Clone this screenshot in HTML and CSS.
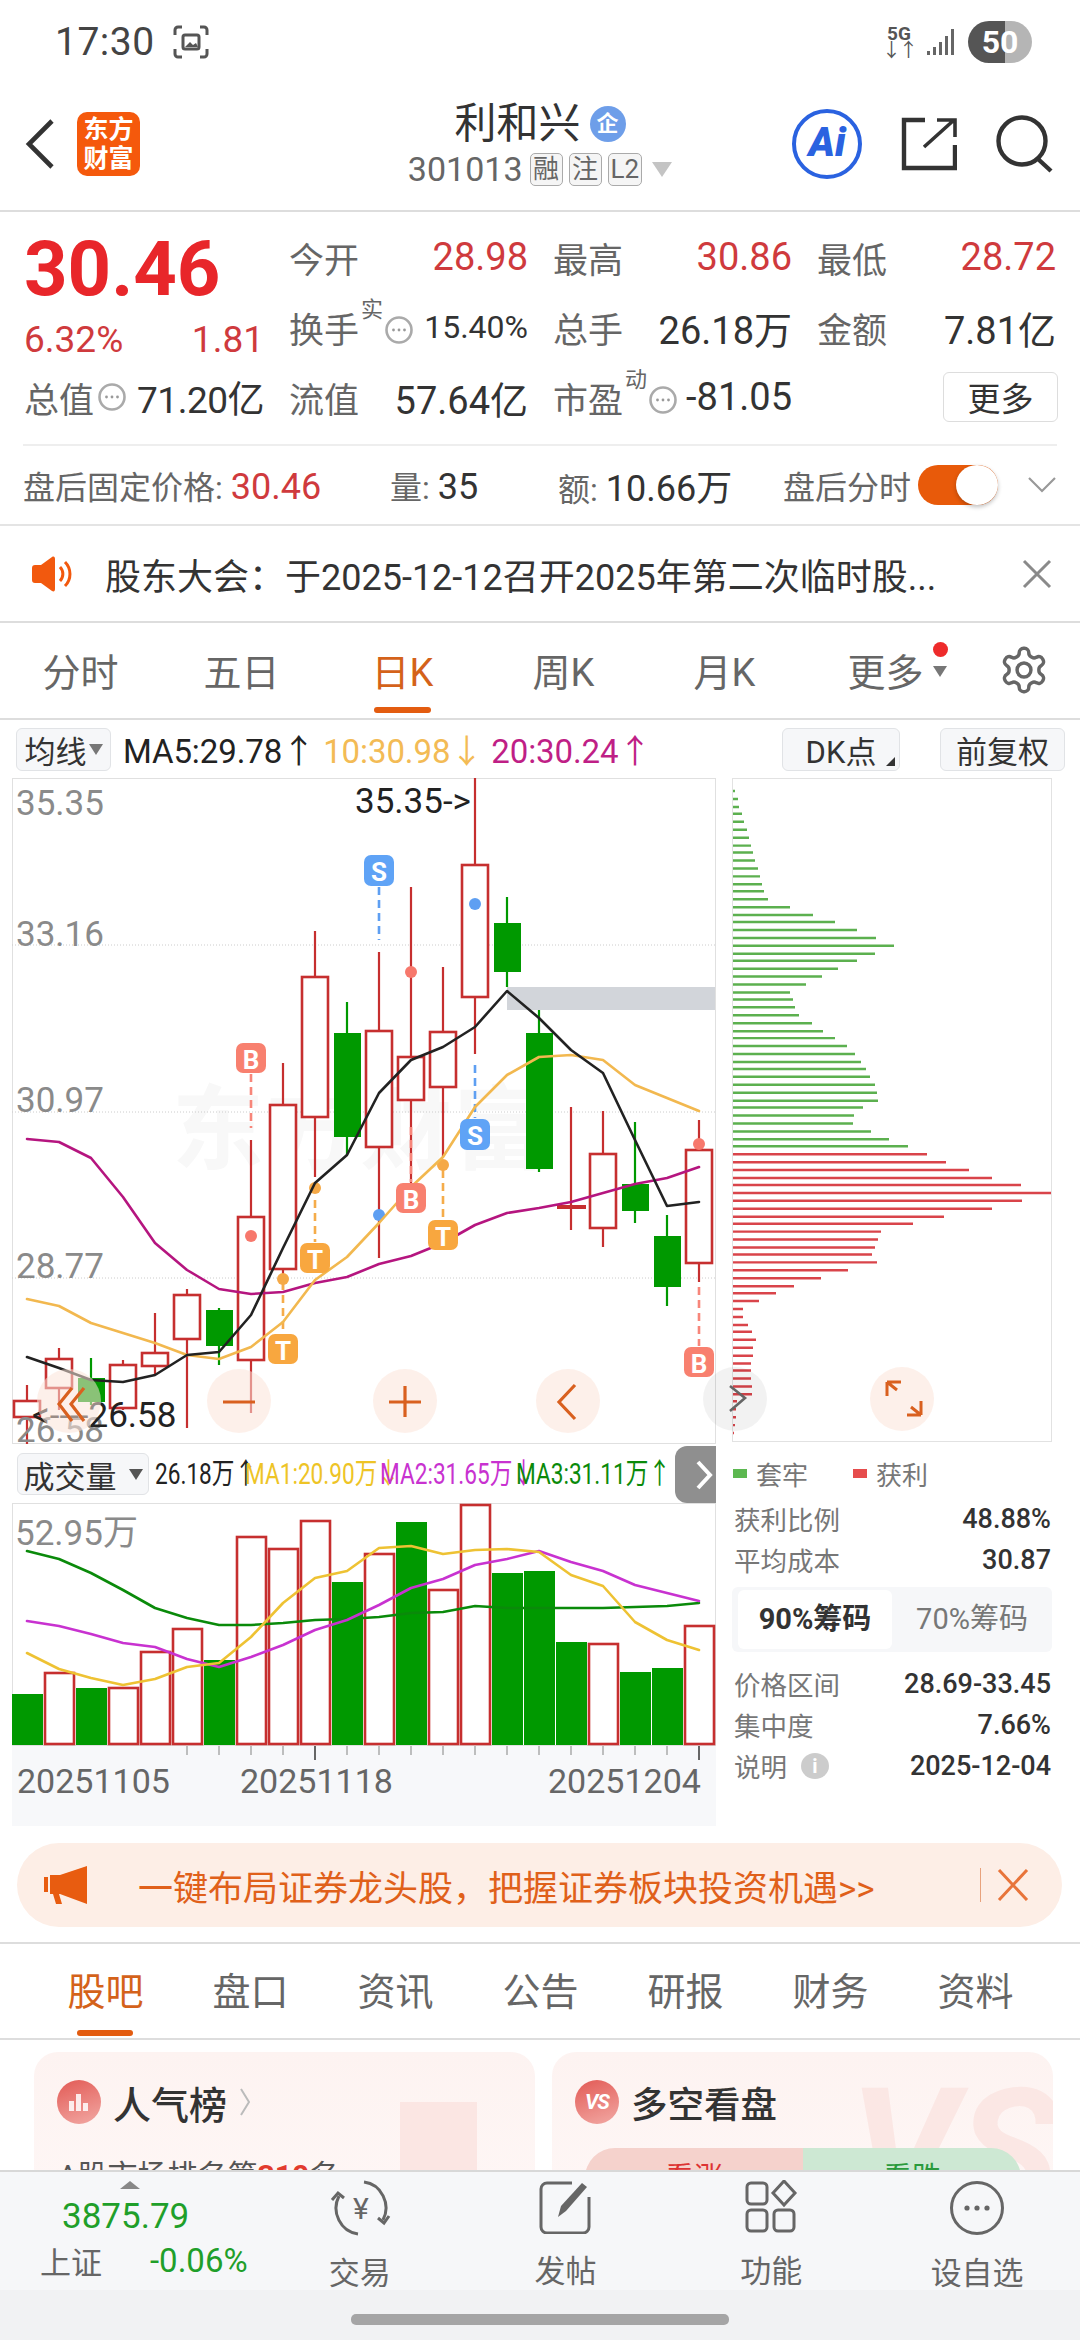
FILE: index.html
```html
<!DOCTYPE html>
<html lang="zh-CN">
<head>
<meta charset="utf-8">
<title>利和兴 301013</title>
<link rel="stylesheet" href="styles.css">
</head>
<body>
<svg class="defs" width="0" height="0" aria-hidden="true">
  <symbol id="more-dots" viewBox="0 0 28 28">
    <circle cx="14" cy="14" r="12.5" fill="none" stroke="#aaa" stroke-width="2.6"/>
    <circle cx="8.5" cy="14" r="1.4" fill="#999"/><circle cx="14" cy="14" r="1.4" fill="#999"/><circle cx="19.5" cy="14" r="1.4" fill="#999"/>
  </symbol>
</svg>
<div class="screen">

  <div class="status">
    <div class="status-left">
      <span class="clock">17:30</span>
      <svg class="shot" viewBox="0 0 36 34" width="36" height="34"><path d="M9 2H5a3 3 0 0 0-3 3v5M27 2h4a3 3 0 0 1 3 3v5M9 32H5a3 3 0 0 1-3-3v-5M27 32h4a3 3 0 0 0 3-3v-5" fill="none" stroke="#555" stroke-width="3"/><rect x="10" y="10" width="16" height="14" rx="2" fill="none" stroke="#555" stroke-width="3"/><path d="M12 22l5-5 3 3 3-2 2 4z" fill="#555"/></svg>
    </div>
    <div class="status-right">
      <div class="net"><span>5G</span><span class="net-arrows">↓↑</span></div>
      <svg class="signal" viewBox="0 0 30 28" width="30" height="28"><path d="M1 23h3v4H1zM7 19h3v8H7zM13 14h3v13h-3zM19 8h3v19h-3zM25 1h3v26h-3z" fill="#666"/></svg>
      <div class="battery">50</div>
    </div>
  </div>

  <header class="nav">
    <div class="nav-left">
      <svg class="back" viewBox="0 0 32 52" width="32" height="52"><path d="M28 3L5 26l23 23" fill="none" stroke="#333" stroke-width="4.6"/></svg>
      <div class="logo"><span>东方</span><span>财富</span></div>
    </div>
    <div class="nav-title">
      <div class="title-line"><span class="title">利和兴</span><span class="qi">企</span></div>
      <div class="code-line"><span class="code">301013</span><span class="tag">融</span><span class="tag">注</span><span class="tag">L2</span><span class="caret"></span></div>
    </div>
    <div class="nav-right">
      <div class="ai"><span>Ai</span></div>
      <svg viewBox="0 0 56 54" width="56" height="54"><path d="M24 3H3v48h51V28" fill="none" stroke="#333" stroke-width="4.4"/><path d="M23 30L53 3M36 3h18v17" fill="none" stroke="#333" stroke-width="3.6"/></svg>
      <svg viewBox="0 0 58 58" width="58" height="58"><circle cx="26" cy="26" r="23.5" fill="none" stroke="#333" stroke-width="4.4"/><path d="M42 44l13 12" fill="none" stroke="#333" stroke-width="4.4"/></svg>
    </div>
  </header>

  <section class="quote">
    <div class="price-block">
      <div class="price">30.46</div>
      <div class="change"><span>6.32%</span><span>1.81</span></div>
    </div>
    <div class="cell"><span class="lbl">今开</span><span class="val up">28.98</span></div>
    <div class="cell"><span class="lbl">最高</span><span class="val up">30.86</span></div>
    <div class="cell"><span class="lbl">最低</span><span class="val up">28.72</span></div>
    <div class="cell"><span class="lbl-group"><span class="lbl">换手</span><sup class="mark">实</sup><svg class="dots" width="28" height="28"><use href="#more-dots"/></svg></span><span class="val val-sm">15.40%</span></div>
    <div class="cell"><span class="lbl">总手</span><span class="val">26.18万</span></div>
    <div class="cell"><span class="lbl">金额</span><span class="val">7.81亿</span></div>
    <div class="cell"><span class="lbl-group"><span class="lbl">总值</span><svg class="dots" width="28" height="28"><use href="#more-dots"/></svg></span><span class="val val-tight">71.20亿</span></div>
    <div class="cell"><span class="lbl">流值</span><span class="val">57.64亿</span></div>
    <div class="cell"><span class="lbl-group"><span class="lbl">市盈</span><sup class="mark">动</sup><svg class="dots" width="28" height="28"><use href="#more-dots"/></svg></span><span class="val">-81.05</span></div>
    <div class="cell cell-end"><button class="more">更多</button></div>
  </section>

  <section class="after">
    <span class="after-a"><span class="muted">盘后固定价格:</span> <span class="up num">30.46</span></span>
    <span class="after-b"><span class="muted">量:</span> <span class="num">35</span></span>
    <span class="after-c"><span class="muted">额:</span> <span class="num">10.66万</span></span>
    <span class="after-d muted">盘后分时</span>
    <span class="toggle"></span>
    <svg class="after-arrow" viewBox="0 0 28 16" width="28" height="16"><path d="M1 1l13 13L27 1" fill="none" stroke="#999" stroke-width="2.2"/></svg>
  </section>

  <section class="notice">
    <svg viewBox="0 0 42 36" width="42" height="36"><path d="M1 12a3 3 0 0 1 3-3h6L21 1c2-1 3 0 3 2v30c0 2-1 3-3 2L10 27H4a3 3 0 0 1-3-3z" fill="#f2590e"/><path d="M29 11a10 10 0 0 1 0 14M34 6a17 17 0 0 1 0 24" fill="none" stroke="#f2590e" stroke-width="3"/></svg>
    <span class="notice-text">股东大会：于2025-12-12召开2025年第二次临时股...</span>
    <svg viewBox="0 0 30 30" width="30" height="30"><path d="M2 2l26 26M28 2L2 28" stroke="#8a8a8a" stroke-width="3"/></svg>
  </section>

  <nav class="periods">
    <span>分时</span><span>五日</span><span class="on">日K</span><span>周K</span><span>月K</span>
    <span class="period-more">更多<i class="red-dot"></i><i class="mini-caret"></i></span>
    <svg class="gear" viewBox="0 0 24 24" width="52" height="52"><path d="M12.22 2h-.44a2 2 0 0 0-2 2v.18a2 2 0 0 1-1 1.73l-.43.25a2 2 0 0 1-2 0l-.15-.08a2 2 0 0 0-2.73.73l-.22.38a2 2 0 0 0 .73 2.73l.15.1a2 2 0 0 1 1 1.72v.51a2 2 0 0 1-1 1.74l-.15.09a2 2 0 0 0-.73 2.73l.22.38a2 2 0 0 0 2.73.73l.15-.08a2 2 0 0 1 2 0l.43.25a2 2 0 0 1 1 1.73V20a2 2 0 0 0 2 2h.44a2 2 0 0 0 2-2v-.18a2 2 0 0 1 1-1.73l.43-.25a2 2 0 0 1 2 0l.15.08a2 2 0 0 0 2.73-.73l.22-.39a2 2 0 0 0-.73-2.73l-.15-.08a2 2 0 0 1-1-1.74v-.5a2 2 0 0 1 1-1.74l.15-.09a2 2 0 0 0 .73-2.73l-.22-.38a2 2 0 0 0-2.73-.73l-.15.08a2 2 0 0 1-2 0l-.43-.25a2 2 0 0 1-1-1.73V4a2 2 0 0 0-2-2z" fill="none" stroke="#666" stroke-width="1.6"/><circle cx="12" cy="12" r="3.2" fill="none" stroke="#666" stroke-width="1.6"/></svg>
  </nav>

  <div class="tools">
    <span class="chip chip-ma">均线<i class="mini-caret"></i></span>
    <span class="ma-line"><span class="c-black">MA5:29.78↑</span> <span class="c-orange">10:30.98↓</span> <span class="c-magenta">20:30.24↑</span></span>
    <span class="chip chip-dk">DK点<i class="corner"></i></span>
    <span class="chip chip-fq">前复权</span>
  </div>

  <div class="chart-row">
    <div class="chart-left">
      <svg class="kline" viewBox="12 778 704 667" width="704" height="667">
        <rect x="12.5" y="778.5" width="703" height="665" class="frame"/>
        <text x="172" y="1162" class="watermark">东方财富</text>
        <path d="M12 945H715M12 1112H715M12 1278H715" class="grid"/>
        <rect x="507" y="987" width="208" height="23" fill="#d2d5da"/>

        <!-- candles: wick first, then body -->
        <path class="wick-up" d="M27 1385V1444M59 1348V1410M123 1360V1410M155 1313V1375M187 1289V1428M251 1140V1413M283 1063V1290M315 931V1177M379 952V1258M411 887V1183M443 967V1157M475 778V1054M571 1107V1230M603 1111V1247M699 1120V1282"/>
        <path class="wick-dn" d="M91 1358V1405M219 1308V1365M347 1002V1155M507 897V987M539 1010V1172M635 1122V1223M667 1215V1306"/>
        <g class="body-up">
          <rect x="14" y="1401" width="26" height="16"/><rect x="46" y="1359" width="26" height="29"/><rect x="110" y="1365" width="26" height="43"/><rect x="142" y="1353" width="26" height="13"/><rect x="174" y="1295" width="26" height="44"/><rect x="238" y="1217" width="26" height="143"/><rect x="270" y="1105" width="26" height="164"/><rect x="302" y="977" width="26" height="140"/><rect x="366" y="1031" width="26" height="116"/><rect x="398" y="1057" width="26" height="43"/><rect x="430" y="1032" width="26" height="55"/><rect x="462" y="865" width="26" height="132"/><rect x="590" y="1154" width="26" height="74"/><rect x="686" y="1150" width="26" height="113"/>
        </g>
        <rect x="557" y="1205" width="29" height="4" fill="#c62f2f"/>
        <g class="body-dn">
          <rect x="78" y="1378" width="27" height="24"/><rect x="206" y="1310" width="27" height="36"/><rect x="334" y="1033" width="27" height="104"/><rect x="494" y="923" width="27" height="49"/><rect x="526" y="1033" width="27" height="136"/><rect x="622" y="1184" width="27" height="27"/><rect x="654" y="1236" width="27" height="51"/>
        </g>

        <!-- signal marks and their leaders -->
        <path class="lead lead-b" d="M251 1074V1128M411 1127V1182M699 1287V1346"/>
        <path class="lead lead-t" d="M283 1282V1333M315 1200V1242M443 1170V1219"/>
        <path class="lead lead-s" d="M379 887V940M475 1065V1118"/>
        <circle cx="251" cy="1236" r="6" class="dot-b"/><circle cx="411" cy="972" r="6" class="dot-b"/><circle cx="699" cy="1144" r="6" class="dot-b"/>
        <circle cx="283" cy="1279" r="6" class="dot-t"/><circle cx="315" cy="1188" r="6" class="dot-t"/><circle cx="443" cy="1165" r="6" class="dot-t"/>
        <circle cx="379" cy="1215" r="6" class="dot-s"/><circle cx="475" cy="904" r="6" class="dot-s"/>

        <!-- moving averages -->
        <polyline class="ma ma-20" points="27,1139 59,1142 91,1158 123,1197 155,1243 187,1270 219,1289 251,1294 283,1292 315,1283 347,1277 379,1264 411,1256 443,1243 475,1225 507,1213 539,1208 571,1202 603,1193 635,1184 667,1178 699,1167"/>
        <polyline class="ma ma-10" points="27,1299 59,1306 91,1323 123,1333 155,1343 187,1355 219,1359 251,1347 283,1322 315,1280 347,1257 379,1223 411,1187 443,1157 475,1107 507,1075 539,1057 571,1055 603,1060 635,1085 667,1098 699,1111"/>
        <polyline class="ma ma-5" points="27,1357 59,1368 91,1380 123,1382 155,1375 187,1355 219,1352 251,1315 283,1248 315,1183 347,1155 379,1093 411,1060 443,1047 475,1027 507,991 539,1018 571,1050 603,1073 635,1140 667,1206 699,1202"/>

        <g class="mark-b"><rect x="236" y="1043" width="30" height="30" rx="7"/><text x="251" y="1069">B</text><rect x="396" y="1183" width="30" height="30" rx="7"/><text x="411" y="1209">B</text><rect x="684" y="1347" width="30" height="30" rx="7"/><text x="699" y="1373">B</text></g>
        <g class="mark-t"><rect x="268" y="1334" width="30" height="30" rx="7"/><text x="283" y="1360">T</text><rect x="300" y="1243" width="30" height="30" rx="7"/><text x="315" y="1269">T</text><rect x="428" y="1220" width="30" height="30" rx="7"/><text x="443" y="1246">T</text></g>
        <g class="mark-s"><rect x="364" y="855" width="30" height="31" rx="7"/><text x="379" y="881">S</text><rect x="460" y="1119" width="30" height="31" rx="7"/><text x="475" y="1145">S</text></g>

        <!-- axis labels -->
        <g class="axis"><text x="16" y="815">35.35</text><text x="16" y="946">33.16</text><text x="16" y="1112">30.97</text><text x="16" y="1278">28.77</text><text x="16" y="1442">26.58</text></g>
        <text x="355" y="813" class="extreme">35.35-&gt;</text>
        <text x="32" y="1427" class="extreme">&lt;----26.58</text>

        <!-- floating chart controls -->
        <circle cx="69" cy="1401" r="32" class="fab"/><circle cx="239" cy="1401" r="32" class="fab"/><circle cx="405" cy="1401" r="32" class="fab"/><circle cx="568" cy="1401" r="32" class="fab"/>
        <path class="fab-ico" d="M72 1388L59 1404l13 17M84 1388L71 1404l13 17M223 1402H255M389 1402H421M405 1386V1417M575 1385L559 1402l16 17"/>
      </svg>

      <div class="vol-tools">
        <span class="chip chip-vol">成交量<i class="mini-caret mini-dark"></i></span>
        <span class="vol-line"><span class="vv vv-0 c-black">26.18万↑</span><span class="vv vv-1 c-yellow">MA1:20.90万↓</span><span class="vv vv-2 c-violet">MA2:31.65万↓</span><span class="vv vv-3 c-green">MA3:31.11万↑</span></span>
        <span class="vol-next"><svg viewBox="0 0 18 30" width="18" height="30"><path d="M3 2l12 13L3 28" fill="none" stroke="#fff" stroke-width="4"/></svg></span>
      </div>

      <svg class="volume" viewBox="12 1503 704 323" width="704" height="323">
        <rect x="12" y="1745" width="704" height="81" fill="#f7f8fa"/>
        <rect x="12.5" y="1503.5" width="703" height="242" class="frame"/>
        <g class="vbar-dn">
          <rect x="12" y="1694" width="31" height="51"/><rect x="76" y="1688" width="31" height="57"/><rect x="204" y="1660" width="31" height="85"/><rect x="332" y="1582" width="31" height="163"/><rect x="396" y="1522" width="31" height="223"/><rect x="492" y="1573" width="31" height="172"/><rect x="524" y="1571" width="31" height="174"/><rect x="556" y="1642" width="31" height="103"/><rect x="620" y="1672" width="31" height="73"/><rect x="652" y="1668" width="31" height="77"/>
        </g>
        <g class="vbar-up">
          <rect x="45" y="1673" width="29" height="71"/><rect x="109" y="1688" width="29" height="56"/><rect x="141" y="1652" width="29" height="92"/><rect x="173" y="1629" width="29" height="115"/><rect x="237" y="1537" width="29" height="207"/><rect x="269" y="1549" width="29" height="195"/><rect x="301" y="1521" width="29" height="223"/><rect x="365" y="1554" width="29" height="190"/><rect x="429" y="1590" width="29" height="154"/><rect x="461" y="1505" width="29" height="239"/><rect x="589" y="1644" width="29" height="100"/><rect x="685" y="1626" width="29" height="118"/>
        </g>
        <polyline class="ma v3" points="27,1551 59,1559 91,1573 123,1590 155,1608 187,1618 219,1625 251,1625 283,1623 315,1620 347,1619 379,1617 411,1613 443,1612 475,1606 507,1608 539,1608 571,1608 603,1608 635,1607 667,1606 699,1603"/>
        <polyline class="ma v2" points="27,1621 59,1626 91,1634 123,1643 155,1647 187,1659 219,1667 251,1657 283,1645 315,1630 347,1620 379,1605 411,1588 443,1579 475,1565 507,1559 539,1551 571,1562 603,1571 635,1585 667,1593 699,1601"/>
        <polyline class="ma v1" points="27,1653 59,1669 91,1678 123,1685 155,1679 187,1667 219,1663 251,1637 283,1603 315,1578 347,1571 379,1548 411,1546 443,1554 475,1550 507,1549 539,1552 571,1575 603,1586 635,1622 667,1640 699,1650"/>
        <path class="ticks" d="M187 1746V1755M219 1746V1755M251 1746V1755M283 1746V1755M347 1746V1755M379 1746V1755M411 1746V1755M443 1746V1755M475 1746V1755M507 1746V1755M539 1746V1755M571 1746V1755M603 1746V1755M635 1746V1755M667 1746V1755"/>
        <path class="ticks ticks-major" d="M315 1746V1760M699 1746V1760"/>
        <text x="15" y="1545" class="axis-text">52.95万</text>
        <g class="dates"><text x="17" y="1793">20251105</text><text x="240" y="1793">20251118</text><text x="548" y="1793">20251204</text></g>
      </svg>
    </div>

    <div class="chart-right">
      <svg class="chips" viewBox="732 780 320 664" width="320" height="664">
        <rect x="732.5" y="780.5" width="319" height="663" class="chips-frame"/>
        <g transform="translate(0 -0.6) scale(1 0.9923) translate(0 6.8)">
        <path class="chip-green" d="M733 793H735M733 801H738M733 809H739M733 816H742M733 824H744M733 832H747M733 840H749M733 848H751M733 855H753M733 863H755M733 871H758M733 879H760M733 887H762M733 894H764M733 902H768M733 910H790M733 918H813M733 925H835M733 933H857M733 941H876M733 949H894M733 957H875M733 964H857M733 972H838M733 980H822M733 988H806M733 996H790M733 1003H793M733 1011H795M733 1019H799M733 1027H812M733 1035H823M733 1042H835M733 1050H847M733 1058H855M733 1066H861M733 1073H866M733 1081H870M733 1089H875M733 1097H877M733 1105H878M733 1112H863M733 1120H854M733 1128H853M733 1136H871M733 1144H889M733 1151H908"/>
        <path class="chip-red" d="M733 1159H927M733 1167H946M733 1175H969M733 1183H992M733 1190H1021M733 1198H1051M733 1206H1022M733 1214H992M733 1222H944M733 1229H913M733 1237H881M733 1245H878M733 1253H875M733 1260H872M733 1268H877M733 1276H848M733 1284H821M733 1292H794M733 1299H776M733 1307H759M733 1315H743M733 1323H743M733 1331H748M733 1338H752M733 1346H756M733 1354H753M733 1362H753M733 1370H751M733 1377H751M733 1385H751M733 1393H752M733 1401H752M733 1408H737M733 1416H736M733 1424H736M733 1432H735M733 1440H734"/>
        </g>
        <circle cx="735" cy="1401" r="32" class="fab-gray"/>
        <path d="M730 1388l15 12-15 13" fill="none" stroke="#666" stroke-width="2.6"/>
        <circle cx="902" cy="1401" r="32" class="fab"/>
        <path class="fab-ico fab-thin" d="M887 1384h14M887 1384v14M887 1384l10 8M921 1417h-14M921 1417v-14M921 1417l-10-8"/>
      </svg>

      <div class="legend"><span class="leg"><i class="sq sq-g"></i>套牢</span><span class="leg"><i class="sq sq-r"></i>获利</span></div>
      <div class="stat stat-first"><span>获利比例</span><b>48.88%</b></div>
      <div class="stat"><span>平均成本</span><b>30.87</b></div>
      <div class="seg"><span class="seg-on">90%筹码</span><span>70%筹码</span></div>
      <div class="stat"><span>价格区间</span><b>28.69-33.45</b></div>
      <div class="stat"><span>集中度</span><b>7.66%</b></div>
      <div class="stat"><span class="with-info">说明<i class="info">i</i></span><b>2025-12-04</b></div>
    </div>
  </div>

  <div class="promo">
    <svg viewBox="0 0 44 38" width="44" height="38"><path d="M0 11h4v15H0zM6 9h10L43 0v38L16 28h-1l3 10h-6l-3-10H6z" fill="#e85c10"/></svg>
    <span class="promo-text">一键布局证券龙头股，把握证券板块投资机遇&gt;&gt;</span>
    <i class="promo-sep"></i>
    <svg viewBox="0 0 32 32" width="32" height="32"><path d="M2 1l28 30M30 1L2 31" stroke="#e8743a" stroke-width="3"/></svg>
  </div>

  <nav class="sections">
    <span class="on">股吧</span><span>盘口</span><span>资讯</span><span>公告</span><span>研报</span><span>财务</span><span>资料</span>
  </nav>

  <div class="cards">
    <article class="card">
      <span class="card-deco deco-bar"></span>
      <div class="card-head">
        <span class="badge"><svg viewBox="0 0 26 26" width="26" height="26"><path d="M3 22V12h5v10zM10 22V5h5v17zM17 22v-8h5v8z" fill="#fff" fill-opacity=".85"/></svg></span>
        <span class="card-title">人气榜</span>
        <svg viewBox="0 0 12 30" width="12" height="30"><path d="M2 2l8 13-8 13" fill="none" stroke="#bbb" stroke-width="2"/></svg>
      </div>
      <div class="rank">A股市场排名第<b>310</b>名</div>
    </article>
    <article class="card">
      <span class="card-deco deco-vs">VS</span>
      <div class="card-head">
        <span class="badge badge-vs">VS</span>
        <span class="card-title card-title-b">多空看盘</span>
      </div>
      <div class="versus"><span class="vs-up">看涨</span><span class="vs-dn">看跌</span></div>
    </article>
  </div>

  <footer class="dock">
    <div class="index">
      <i class="index-caret"></i>
      <div class="index-val">3875.79</div>
      <div class="index-row"><span class="index-name">上证</span><span class="index-pct">-0.06%</span></div>
    </div>
    <div class="dock-item">
      <svg viewBox="0 0 64 56" width="64" height="56"><path d="M36 2a25 26 0 0 1 19 38M30 54a25 26 0 0 1-19-38" fill="none" stroke="#666" stroke-width="3"/><path d="M50 38l6 5 5-7M16 18l-6-5-6 7" fill="none" stroke="#666" stroke-width="3"/><text x="33" y="39" class="yen">¥</text></svg>
      <span>交易</span>
    </div>
    <div class="dock-item">
      <svg viewBox="0 0 56 54" width="56" height="54"><path d="M34 3H9a6 6 0 0 0-6 6v38a6 6 0 0 0 6 6h36a6 6 0 0 0 6-6V17" fill="none" stroke="#666" stroke-width="3"/><path d="M20 37l3-11L44 3l5 4-21 24z" fill="#666"/></svg>
      <span>发帖</span>
    </div>
    <div class="dock-item">
      <svg viewBox="0 0 54 54" width="54" height="54"><g fill="none" stroke="#666" stroke-width="3"><rect x="3" y="3" width="20" height="21" rx="4"/><rect x="3" y="30" width="20" height="21" rx="4"/><rect x="30" y="30" width="20" height="21" rx="4"/><path d="M40 1l11 12-11 12-11-12z"/></g></svg>
      <span>功能</span>
    </div>
    <div class="dock-item">
      <svg viewBox="0 0 56 56" width="56" height="56"><circle cx="28" cy="28" r="25.5" fill="none" stroke="#666" stroke-width="3"/><circle cx="18" cy="28" r="2.6" fill="#666"/><circle cx="28" cy="28" r="2.6" fill="#666"/><circle cx="38" cy="28" r="2.6" fill="#666"/></svg>
      <span>设自选</span>
    </div>
  </footer>
  <div class="home"><i></i></div>
</div>
</body>
</html>
```
FILE: styles.css
```css
* { box-sizing: border-box; }
html, body { margin: 0; padding: 0; background: #fff; }
body { font-family: Roboto, "Noto Sans CJK SC", sans-serif; color: #333; }
i { font-style: normal; display: block; }
.defs { position: absolute; }
.screen { width: 1080px; height: 2340px; overflow: hidden; display: flex; flex-direction: column; }

/* status bar */
.status { height: 84px; flex: none; display: flex; justify-content: space-between; align-items: center; padding: 0 48px 0 55px; }
.status-left { display: flex; align-items: center; gap: 18px; }
.clock { font-size: 39px; line-height: 1; color: #444; letter-spacing: .5px; }
.status-right { display: flex; align-items: center; gap: 12px; }
.net { display: flex; flex-direction: column; align-items: center; font-size: 19px; line-height: 17px; font-weight: 700; color: #555; width: 30px; }
.net-arrows { font-weight: 400; font-size: 19px; letter-spacing: -2px; }
.battery { width: 64px; height: 42px; border-radius: 21px; background: linear-gradient(90deg, #555 0 58%, #b5b5b5 58% 100%); color: #fff; font-size: 32px; font-weight: 700; line-height: 42px; text-align: center; }

/* navigation header */
.nav { height: 128px; flex: none; display: grid; grid-template-columns: 1fr auto 1fr; border-bottom: 2px solid #ddd; padding-bottom: 6px; }
.nav-left { display: flex; align-items: center; gap: 21px; padding-left: 24px; }
.logo { width: 63px; height: 64px; border-radius: 10px; background: #f5590c; color: #fff; font-size: 25px; line-height: 29px; font-weight: 700; display: flex; flex-direction: column; align-items: center; justify-content: center; }
.nav-title { display: flex; flex-direction: column; align-items: center; justify-content: center; gap: 6px; }
.title-line { display: flex; align-items: center; gap: 9px; height: 44px; }
.title { font-size: 42px; line-height: 44px; color: #333; }
.qi { width: 36px; height: 36px; border-radius: 50%; background: #6e9ee9; color: #fff; font-size: 22px; line-height: 36px; text-align: center; font-weight: 700; }
.code-line { display: flex; align-items: center; gap: 6px; height: 34px; color: #666; }
.code { font-size: 34px; line-height: 34px; margin-right: 1px; }
.tag { min-width: 33px; height: 33px; padding: 0 2px; border: 1.5px solid #aaa; border-radius: 5px; background: #f5f5f5; font-size: 26px; line-height: 30px; text-align: center; color: #666; }
.caret { width: 0; height: 0; border-left: 10px solid transparent; border-right: 10px solid transparent; border-top: 15px solid #c4c4c4; margin-left: 4px; }
.nav-right { display: flex; align-items: center; justify-content: flex-end; gap: 39px; padding-right: 26px; }
.ai { width: 70px; height: 70px; border-radius: 50%; border: 4px solid #2a62e0; color: #2a62e0; font-size: 40px; font-weight: 900; font-style: italic; line-height: 60px; text-align: center; }

/* quote block */
.quote { height: 232px; flex: none; display: grid; grid-template-columns: 240px 239px 239px 239px; grid-template-rows: 70px 70px 70px; column-gap: 25px; padding: 10px 24px 0; }
.price-block { grid-row: 1 / span 2; grid-column: 1; }
.price { font-size: 76px; font-weight: 700; line-height: 84px; color: #e8262a; margin-top: 5px; }
.change { display: flex; justify-content: space-between; font-size: 37px; line-height: 44px; color: #cf3a3d; margin-top: 7px; }
.cell { display: flex; justify-content: space-between; align-items: center; font-size: 34px; }
.cell-end { justify-content: flex-end; }
.lbl-group { display: flex; align-items: center; position: relative; }
.lbl { color: #666; font-size: 35px; }
.val { color: #333; font-size: 38px; }
.val-sm { font-size: 32px; }
.val-tight { letter-spacing: -.5px; font-size: 37px; }
.up { color: #cf3a3d; }
.mark { font-size: 22px; line-height: 24px; color: #666; align-self: flex-start; margin: -4px 2px 0 2px; }
.dots { margin-left: 4px; }
.mark + .dots { margin-left: 0; margin-top: 6px; }
.more { width: 115px; height: 50px; margin: 0 -2px 0 0; padding: 0; border: 1.5px solid #ddd; border-radius: 6px; background: #fff; font: inherit; font-size: 33px; color: #333; }

/* after-hours row */
.after { height: 80px; flex: none; margin: 0 23px; border-top: 2px solid #eee; display: flex; align-items: center; font-size: 32px; color: #333; position: relative; }
.num { font-size: 36px; }
.muted { color: #666; }
.after-a { width: 367px; }
.after-b { width: 168px; }
.after-c { width: 225px; }
.after-d { width: 135px; }
.toggle { width: 80px; height: 40px; border-radius: 20px; background: #e85a0a; position: relative; }
.toggle::after { content: ""; position: absolute; right: 0; top: 0; width: 42px; height: 40px; border-radius: 50%; background: #fff; box-shadow: 0 2px 4px rgba(0,0,0,.25); }
.after-arrow { margin-left: 30px; }

/* notice */
.notice { height: 99px; flex: none; border-top: 2px solid #e4e4e4; border-bottom: 2px solid #ddd; display: flex; align-items: center; padding: 0 28px 0 31px; }
.notice-text { flex: 1; font-size: 36px; color: #333; margin-left: 32px; white-space: nowrap; }

/* period tabs */
.periods { height: 97px; flex: none; display: flex; align-items: center; border-bottom: 2px solid #ddd; font-size: 38px; color: #666; padding-bottom: 2px; }
.periods > span { width: 161px; text-align: center; position: relative; }
.periods .on { color: #d4621a; }
.periods .on::after { content: ""; position: absolute; left: 52px; bottom: -16px; width: 57px; height: 6px; border-radius: 3px; background: #e35c10; }
.red-dot { position: absolute; right: 18px; top: 0; width: 15px; height: 15px; border-radius: 50%; background: #ee2b2b; }
.mini-caret { width: 0; height: 0; border-left: 7px solid transparent; border-right: 7px solid transparent; border-top: 11px solid #777; flex: none; }
.period-more .mini-caret { position: absolute; right: 19px; top: 24px; }
.gear { margin-left: 32px; }

/* chart toolbar */
.tools { height: 58px; flex: none; display: flex; align-items: center; padding-left: 16px; }
.chip { height: 43px; border: 1.5px solid #e1e3e6; border-radius: 6px; background: #f6f7f9; display: flex; align-items: center; justify-content: center; color: #333; font-size: 31px; position: relative; white-space: nowrap; flex: none; }
.chip-ma { width: 95px; gap: 2px; }
.ma-line { font-size: 33px; margin-left: 12px; white-space: nowrap; letter-spacing: -.1px; color: #222; flex: 1; }
.chip-dk { width: 118px; }
.chip-fq { width: 125px; margin: 0 15px 0 40px; }
.corner { position: absolute; right: 4px; bottom: 4px; width: 0; height: 0; border-left: 9px solid transparent; border-bottom: 9px solid #333; }
.c-black { color: #222; }
.c-orange { color: #f3bb55; }
.c-magenta { color: #bf1f86; }
.c-yellow { color: #eec426; }
.c-violet { color: #c832d0; }
.c-green { color: #0a8a0a; }

/* charts */
.chart-row { height: 1047px; flex: none; display: flex; gap: 16px; padding-left: 12px; }
.chart-left { width: 704px; flex: none; }
.chart-right { width: 320px; flex: none; }
svg { display: block; flex: none; }
.kline, .volume, .chips { overflow: visible; }
.frame { fill: none; stroke: #e0e0e0; stroke-width: 1; }
.grid { fill: none; stroke: #ccc; stroke-width: 1; stroke-dasharray: 1 2; }
.watermark { font-size: 92px; font-weight: 700; fill: #f8f8f8; letter-spacing: 2px; }
.wick-up { fill: none; stroke: #c62f2f; stroke-width: 2.2; }
.wick-dn { fill: none; stroke: #009900; stroke-width: 2.2; }
.body-up rect { fill: #fff; stroke: #c62f2f; stroke-width: 2.6; }
.body-dn rect { fill: #009900; }
.ma { fill: none; stroke-width: 2.6; stroke-linejoin: round; stroke-linecap: round; }
.ma-5 { stroke: #222; }
.ma-10 { stroke: #f2b84f; }
.ma-20 { stroke: #b5157f; }
.lead { fill: none; stroke-width: 2.6; stroke-dasharray: 8 5; }
.lead-b { stroke: #f7867a; }
.lead-t { stroke: #f5ac4a; }
.lead-s { stroke: #5e9ff2; }
.dot-b { fill: #f7786c; }
.dot-t { fill: #f5a947; }
.dot-s { fill: #5e9ff2; }
.mark-b rect { fill: #f8806f; }
.mark-t rect { fill: #f8a73f; }
.mark-s rect { fill: #5fa3f6; }
.mark-b text, .mark-t text, .mark-s text { fill: #fff; font-size: 26px; font-weight: 700; text-anchor: middle; }
.axis text, .axis-text { font-size: 35px; fill: #8a8a8a; }
.extreme { font-size: 35px; fill: #222; }
.fab { fill: #fbe3d8; fill-opacity: .55; }
.fab-gray { fill: #000; fill-opacity: .05; }
.fab-ico { fill: none; stroke: #d9601f; stroke-width: 3.2; }
.fab-thin { stroke-width: 3; }

/* volume panel */
.vol-tools { height: 58px; display: flex; align-items: center; position: relative; padding-left: 5px; }
.chip-vol { width: 132px; gap: 12px; height: 42px; }
.mini-dark { border-top-color: #555; }
.vol-line { display: flex; font-size: 29px; margin-left: 6px; white-space: nowrap; height: 40px; line-height: 40px; }
.vv { display: block; flex: none; transform-origin: 0 50%; transform: scaleX(.78); }
.vv-0 { width: 90px; }
.vv-1 { width: 135px; }
.vv-2 { width: 136px; }
.vv-3 { width: 130px; }
.vol-next { position: absolute; right: 0; top: 1px; width: 41px; height: 57px; background: #8f8f8f; border-radius: 12px 0 0 12px; display: flex; align-items: center; justify-content: flex-end; padding-right: 3px; }
.vbar-dn rect { fill: #009900; }
.vbar-up rect { fill: #fff; stroke: #c62f2f; stroke-width: 2.6; }
.v1 { stroke: #eec233; }
.v2 { stroke: #c832d0; }
.v3 { stroke: #0a8a0a; }
.ticks { fill: none; stroke: #aaa; stroke-width: 1.5; }
.ticks-major { stroke: #666; stroke-width: 2; }
.dates text { font-size: 34px; fill: #666; }

/* chip distribution */
.chips-frame { fill: none; stroke: #e2e2e2; stroke-width: 1; }
.chip-green { fill: none; stroke: #5cb04f; stroke-width: 2.5; }
.chip-red { fill: none; stroke: #d9444a; stroke-width: 2.5; }
.legend { display: flex; height: 40px; margin-top: 11px; align-items: center; font-size: 26px; color: #777; gap: 48px; padding-left: 1px; white-space: nowrap; }
.leg { display: flex; align-items: center; gap: 9px; width: 72px; flex: none; }
.sq { width: 14px; height: 9px; flex: none; }
.sq-g { background: #5cb850; }
.sq-r { background: #e64c4c; }
.stat { display: flex; justify-content: space-between; align-items: center; height: 41px; font-size: 26.5px; color: #777; padding: 0 1px 0 2px; }
.stat b { font-weight: 500; color: #333; font-size: 27px; }
.stat-first { margin-top: 5px; }
.seg { height: 65px; margin: 7px 0 11px; background: #f6f7f9; border-radius: 6px; display: flex; align-items: center; font-size: 29px; color: #777; padding: 0 0 0 6px; }
.seg span { flex: 1; text-align: center; line-height: 59px; }
.seg .seg-on { flex: none; width: 154px; background: #fff; color: #333; font-weight: 700; border-radius: 6px; }
.with-info { display: flex; align-items: center; gap: 14px; }
.info { width: 28px; height: 26px; border-radius: 50%; background: #ccc; color: #fff; font-size: 20px; line-height: 26px; text-align: center; font-weight: 700; }

/* promo banner */
.promo { height: 84px; flex: none; margin: 18px 18px 0 17px; border-radius: 42px; background: #fdeee6; display: flex; align-items: center; padding-left: 27px; }
.promo-text { font-size: 35px; color: #e0601a; margin-left: 50px; width: 842px; white-space: nowrap; }
.promo-sep { width: 1px; height: 34px; background: #e8a27c; }
.promo svg:last-child { margin-left: 16px; }

/* section tabs */
.sections { height: 98px; flex: none; margin-top: 15px; border-top: 2px solid #ddd; border-bottom: 2px solid #ddd; display: flex; padding: 0 0 0 33px; align-items: center; font-size: 38px; color: #666; }
.sections span { width: 145px; text-align: center; position: relative; padding-bottom: 6px; }
.sections .on { color: #d4621a; }
.sections .on::after { content: ""; position: absolute; left: 44px; bottom: -14px; width: 56px; height: 6px; border-radius: 3px; background: #e35c10; }

/* feature cards */
.cards { flex: 1; min-height: 0; overflow: hidden; display: flex; gap: 17px; padding: 12px 27px 0 34px; }
.card { width: 501px; height: 300px; flex: none; border-radius: 24px; background: linear-gradient(180deg, #fdf3f1, #fffafa); position: relative; overflow: hidden; }
.card-deco { position: absolute; }
.deco-bar { right: 58px; top: 50px; width: 77px; height: 100px; background: #fbe6e3; }
.deco-vs { right: -6px; top: 14px; font-size: 170px; line-height: 1; font-weight: 700; font-style: italic; color: #fbe7e4; }
.card-head { position: relative; display: flex; align-items: center; height: 44px; margin: 28px 0 0 23px; }
.badge { width: 44px; height: 44px; border-radius: 50%; background: linear-gradient(160deg, #e25a55, #f2a9a4); display: flex; align-items: center; justify-content: center; color: #fff; flex: none; }
.badge-vs { font-size: 21px; font-weight: 700; font-style: italic; letter-spacing: -1px; }
.card-title { font-size: 38px; font-weight: 500; color: #333; margin: 0 12px; }
.card-title-b { font-size: 36.5px; }
.rank { position: relative; margin: 34px 0 0 24px; font-size: 30px; line-height: 36px; color: #555; }
.rank b { color: #e23b2e; }
.versus { position: relative; display: flex; margin: 24px 0 0 33px; width: 436px; height: 60px; border-radius: 30px; overflow: hidden; font-size: 29px; text-align: center; line-height: 60px; }
.vs-up { flex: 1; background: #f5d2cc; color: #d33; }
.vs-dn { flex: 1; background: #cde8d3; color: #2a9a3c; }

/* bottom dock */
.dock { height: 120px; flex: none; position: relative; background: #f6f7f9; border-top: 2px solid #d8d8d8; display: flex; align-items: flex-start; }
.index { width: 272px; height: 100%; position: relative; padding-left: 40px; }
.index-caret { position: absolute; left: 120px; top: 9px; width: 0; height: 0; border-left: 10px solid transparent; border-right: 10px solid transparent; border-bottom: 8px solid #888; }
.index-val { font-size: 35px; line-height: 42px; color: #1f9f2a; margin: 24px 0 0 22px; }
.index-row { display: flex; align-items: center; font-size: 33px; }
.index-name { color: #666; width: 110px; font-size: 31px; }
.index-pct { color: #1f9f2a; }
.dock-item { width: 206px; height: 100%; display: flex; flex-direction: column; align-items: center; padding-top: 8px; font-size: 31px; color: #666; }
.dock-item span { margin-top: 18px; line-height: 40px; }
.dock-item:nth-child(2) { margin-left: -15px; }
.yen { font-size: 30px; fill: #666; text-anchor: middle; }
.home { height: 50px; flex: none; background: #f1f2f3; display: flex; justify-content: center; padding-top: 24px; }
.home i { width: 378px; height: 11px; border-radius: 5px; background: #a5a5a5; }
```
